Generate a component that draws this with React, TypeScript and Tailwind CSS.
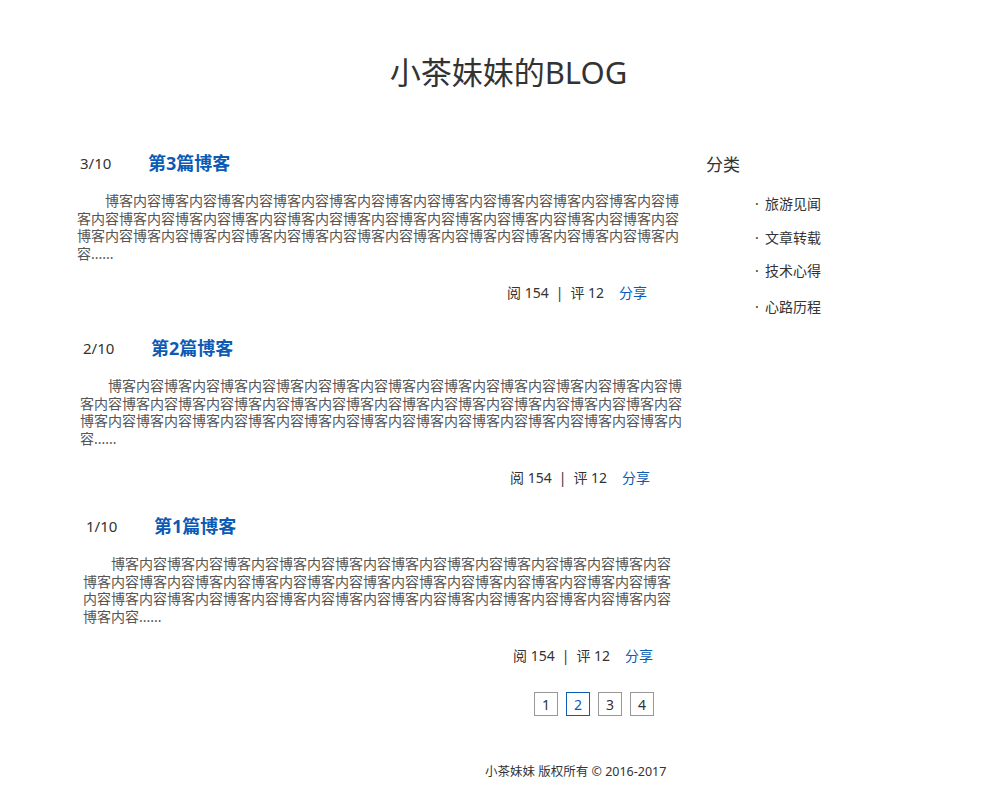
const FONT = { fontFamily: '"Noto Sans", "Noto Sans CJK SC", sans-serif' };

const BODY = "博客内容".repeat(32) + "......";

type Post = { no: string; title: string; offset: string; width: string; gap: string };

const posts: Post[] = [
  { no: "3/10", title: "第3篇博客", offset: "ml-[77px]", width: "w-[604px]", gap: "mt-0" },
  { no: "2/10", title: "第2篇博客", offset: "ml-[80px]", width: "w-[604px]", gap: "mt-[34px]" },
  { no: "1/10", title: "第1篇博客", offset: "ml-[83px]", width: "w-[590px]", gap: "mt-[27px]" },
];

const cats = ["旅游见闻", "文章转载", "技术心得", "心路历程"];

function PostItem({ p }: { p: Post }) {
  return (
    <div className={`${p.offset} ${p.width} ${p.gap}`}>
      <div className="flex items-center h-[24px]">
        <span className="ml-[3px] w-[68px] text-[15px] text-[#333]">{p.no}</span>
        <a className="text-[18px] font-bold text-[#0b5bb5]">{p.title}</a>
      </div>
      <p className="mt-[17px] text-[14px] leading-[17.5px] text-[#555] indent-[28px] break-all">{BODY}</p>
      <div className="mt-[20px] pl-[430px] flex items-center h-[20px] text-[14px] text-[#333] whitespace-nowrap">
        <span>阅 154</span>
        <span className="mx-[7px]">|</span>
        <span>评 12</span>
        <a className="ml-[15px] text-[#0b5bb5]">分享</a>
      </div>
    </div>
  );
}

export default function App() {
  return (
    <div className="w-[1000px] min-h-[800px] bg-white" style={FONT}>
      <h1 className="pt-[52px] pl-[17px] text-center text-[31px] leading-[40px] text-[#333]">小茶妹妹的BLOG</h1>
      <div className="mt-[59px] flex">
        <div className="w-[690px]">
          {posts.map((p) => (
            <PostItem key={p.no} p={p} />
          ))}
        </div>
        <div className="ml-[16px] pt-[2px]">
          <h2 className="text-[17px] leading-[24px] text-[#333]">分类</h2>
          <ul className="mt-[16px] ml-[49px] text-[14px] text-[#333] flex flex-col gap-[11.5px]">
            {cats.map((c, i) => (
              <li key={c} className={`leading-[22px] flex items-center ${i === 3 ? "mt-[2px]" : ""}`}>
                <span className="w-[10px]">·</span>
                {c}
              </li>
            ))}
          </ul>
        </div>
      </div>
      <div className="mt-[27px] ml-[534px] flex gap-[8px] text-[14px] text-[#333]">
        {["1", "2", "3", "4"].map((n) => (
          <a
            key={n}
            className={`w-[24px] h-[24px] flex items-center justify-center border ${
              n === "2" ? "border-[#0b5bb5] text-[#0b5bb5]" : "border-[#999]"
            }`}
          >
            {n}
          </a>
        ))}
      </div>
      <footer className="mt-[47px] ml-[485px] text-[12.5px] leading-[18px] text-[#333]">小茶妹妹 版权所有 © 2016-2017</footer>
    </div>
  );
}
